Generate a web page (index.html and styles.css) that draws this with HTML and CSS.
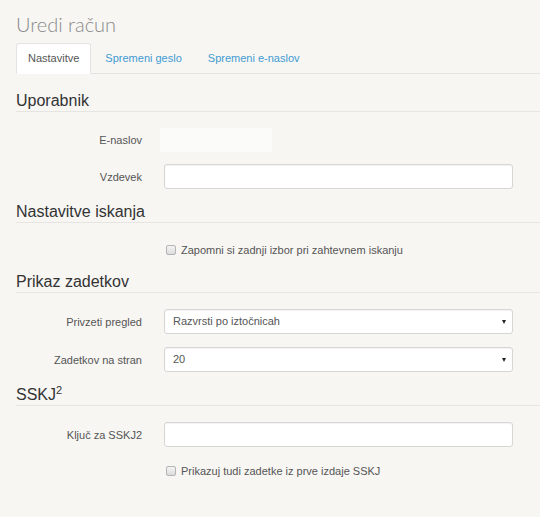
FILE: index.html
```html
<!DOCTYPE html>
<html lang="sl">
<head>
    <meta charset="UTF-8">
    <title>Uredi račun</title>
    <link rel="stylesheet" href="styles.css">
</head>
<body>
    <div class="page">
        <h1 class="title">Uredi račun</h1>

        <ul class="tabs">
            <li class="tab active">Nastavitve</li>
            <li class="tab">Spremeni geslo</li>
            <li class="tab">Spremeni e-naslov</li>
        </ul>

        <form class="settings">
            <h3 class="section">Uporabnik</h3>
            <div class="row row-static">
                <label class="label">E-naslov</label>
                <div class="field"><span class="static-value"></span></div>
            </div>
            <div class="row">
                <label class="label">Vzdevek</label>
                <div class="field"><input class="control" type="text"></div>
            </div>

            <h3 class="section">Nastavitve iskanja</h3>
            <div class="row row-check">
                <div></div>
                <div class="field check"><span class="box"></span>Zapomni si zadnji izbor pri zahtevnem iskanju</div>
            </div>

            <h3 class="section">Prikaz zadetkov</h3>
            <div class="row">
                <label class="label">Privzeti pregled</label>
                <div class="field select"><span class="control">Razvrsti po iztočnicah</span></div>
            </div>
            <div class="row">
                <label class="label">Zadetkov na stran</label>
                <div class="field select"><span class="control">20</span></div>
            </div>

            <h3 class="section">SSKJ<sup>2</sup></h3>
            <div class="row">
                <label class="label">Ključ za SSKJ2</label>
                <div class="field"><input class="control" type="text"></div>
            </div>
            <div class="row row-check">
                <div></div>
                <div class="field check"><span class="box"></span>Prikazuj tudi zadetke iz prve izdaje SSKJ</div>
            </div>
        </form>
    </div>
</body>
</html>
```

FILE: styles.css
```css
body {
    margin: 0;
    background-color: #f7f6f3;
    font-family: "Liberation Sans", Arial, sans-serif;
    color: #333;
}
.page {
    padding: 12px 0 0 16px;
}
.title {
    margin: 0;
    height: 31px;
    font-family: Lato, "Open Sans", sans-serif;
    font-weight: 300;
    font-size: 20px;
    line-height: 24px;
    color: #8a8a8a;
}
.tabs {
    display: flex;
    gap: 2px;
    margin: 0;
    padding: 0;
    list-style: none;
    border-bottom: 1px solid #e3e3e1;
}
.tab {
    height: 29px;
    padding: 0 11px;
    margin-bottom: -1px;
    font-size: 11px;
    line-height: 29px;
    color: #3f9bd2;
    border: 1px solid transparent;
    border-radius: 3px 3px 0 0;
}
.tab.active {
    color: #555;
    background-color: #fff;
    border-color: #e3e3e1;
    border-bottom-color: #fff;
}
.section {
    margin: 0 0 16px;
    font-size: 16px;
    font-weight: normal;
    line-height: 20px;
    color: #333;
    border-bottom: 1px solid #e6e5e2;
}
.tabs + .settings .section:first-child {
    margin-top: 17px;
}
.section sup {
    font-size: 11px;
    line-height: 0;
    vertical-align: 6px;
}
.row {
    display: grid;
    grid-template-columns: 126px 349px;
    column-gap: 22px;
    align-items: center;
    height: 25px;
    margin-bottom: 13px;
}
.row-static {
    height: 23px;
}
.row-check {
    height: 20px;
}
.label {
    font-size: 11px;
    color: #555;
    text-align: right;
}
.field {
    height: 100%;
    position: relative;
}
.static-value {
    display: block;
    width: 112px;
    height: 24px;
    margin-left: -4px;
    background-color: #fbfbfa;
}
.control {
    display: block;
    box-sizing: border-box;
    width: 100%;
    height: 25px;
    margin: 0;
    padding: 0 8px;
    font-family: inherit;
    font-size: 11px;
    line-height: 23px;
    color: #555;
    background-color: #fff;
    border: 1px solid #d6d6d4;
    border-radius: 3px;
    box-shadow: inset 0 1px 1px rgba(0, 0, 0, 0.05);
}
.select::after {
    content: "";
    position: absolute;
    right: 7px;
    top: 11px;
    border-left: 2.5px solid transparent;
    border-right: 2.5px solid transparent;
    border-top: 4px solid #222;
}
.check {
    display: flex;
    align-items: center;
    gap: 5px;
    padding: 2px 0 0 2px;
    box-sizing: border-box;
    font-size: 11px;
    color: #555;
}
.box {
    width: 8px;
    height: 8px;
    border: 1px solid #b5b5b5;
    border-radius: 2px;
    background: linear-gradient(#f4f4f4, #dcdcdc);
}
```
